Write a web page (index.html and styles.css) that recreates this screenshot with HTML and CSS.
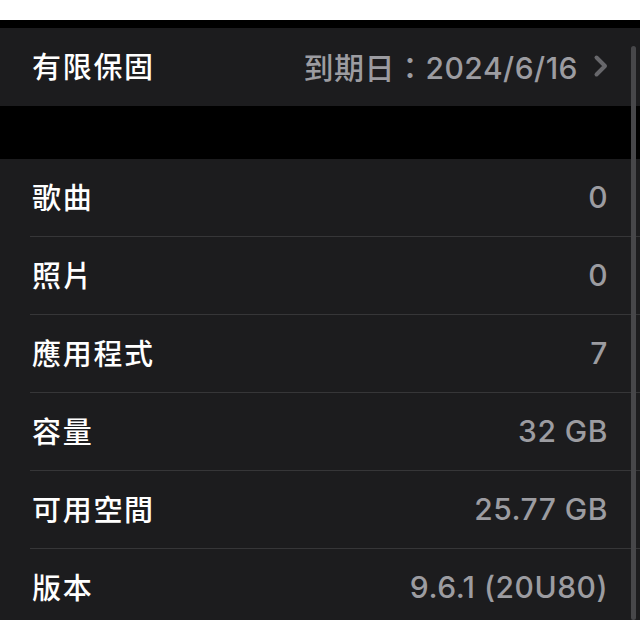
FILE: index.html
```html
<!DOCTYPE html>
<html lang="zh-Hant">
<head>
<meta charset="utf-8">
<title>關於本機</title>
<link rel="stylesheet" href="styles.css">
</head>
<body>
<div class="screen">
  <div class="group">
    <div class="row">
      <span class="label">有限保固</span>
      <span class="value">到期日：2024/6/16<svg class="chev" viewBox="0 0 16 24"><path d="M3.5 3.5 L12 12 L3.5 20.5" fill="none" stroke="#67676b" stroke-width="4" stroke-linecap="round" stroke-linejoin="round"/></svg></span>
    </div>
  </div>
  <div class="gap"></div>
  <div class="group">
    <div class="row"><span class="label">歌曲</span><span class="value">0</span></div>
    <div class="row"><span class="label">照片</span><span class="value">0</span></div>
    <div class="row"><span class="label">應用程式</span><span class="value">7</span></div>
    <div class="row"><span class="label">容量</span><span class="value">32 GB</span></div>
    <div class="row"><span class="label">可用空間</span><span class="value">25.77 GB</span></div>
    <div class="row"><span class="label">版本</span><span class="value">9.6.1 (20U80)</span></div>
  </div>
  <div class="scrollbar"></div>
</div>
</body>
</html>
```

FILE: styles.css
```css
html, body {
  margin: 0;
  padding: 0;
  background: #ffffff;
}

.screen {
  position: relative;
  margin-top: 20px;
  height: 600px;
  overflow: hidden;
  background: #000000;
  padding-top: 8px;
  box-sizing: border-box;
}

.group {
  background: #1c1c1e;
  padding-left: 30px;
}

.gap {
  height: 53px;
  background: #000000;
}

.row {
  height: 77px;
  border-bottom: 1px solid #363638;
  display: flex;
  align-items: center;
  justify-content: space-between;
  padding-left: 2px;
  padding-right: 32px;
}

.group:first-child .row {
  border-bottom: none;
  height: 78px;
}

.label {
  font-family: "Noto Sans CJK TC", sans-serif;
  font-size: 29px;
  font-weight: 500;
  letter-spacing: 1.7px;
  color: #ffffff;
  padding-bottom: 4px;
}

.value {
  font-family: "Inter", "Noto Sans CJK TC", sans-serif;
  font-size: 30px;
  font-weight: 500;
  letter-spacing: 0.5px;
  color: #9c9ca1;
  display: flex;
  align-items: center;
  padding-bottom: 2px;
}

.chev {
  flex: 0 0 16px;
  width: 16px;
  height: 24px;
  display: block;
  margin-left: 15px;
  margin-right: -1px;
}

.scrollbar {
  position: absolute;
  right: 4px;
  top: 26px;
  bottom: 0;
  width: 5px;
  border-radius: 3px;
  background: #47474a;
}
```
